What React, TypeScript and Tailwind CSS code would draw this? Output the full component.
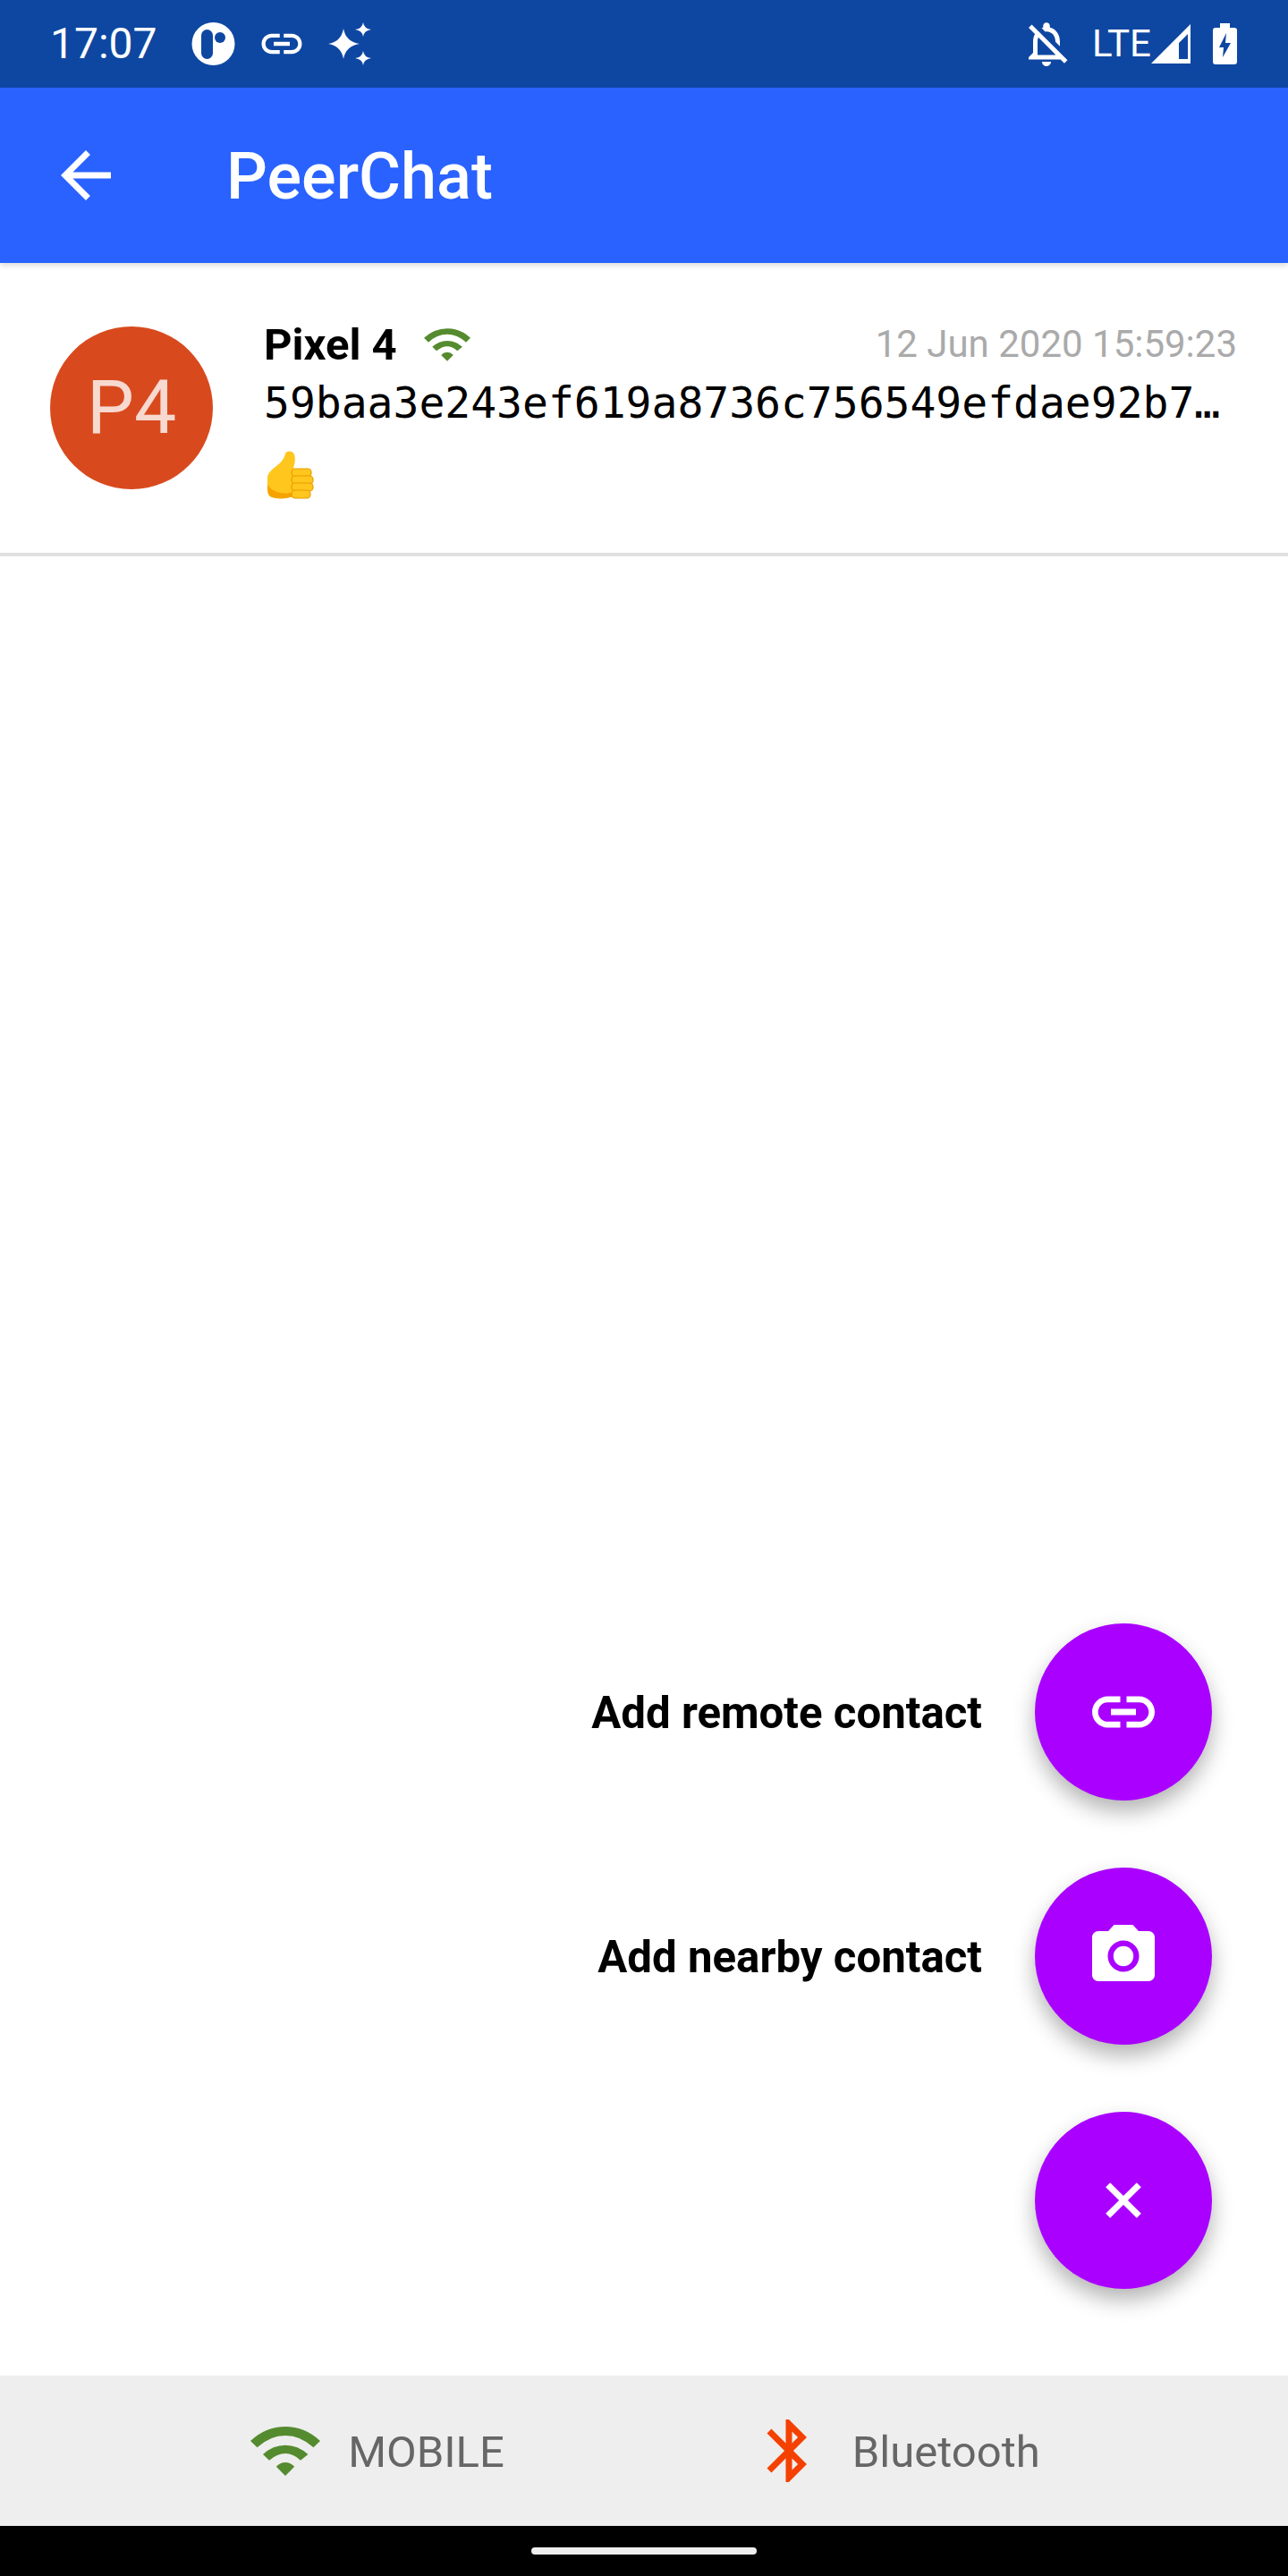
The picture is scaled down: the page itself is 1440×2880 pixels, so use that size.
import React from "react";

const LINK =
  "M3.9 12c0-1.71 1.39-3.1 3.1-3.1h4V7H7c-2.76 0-5 2.24-5 5s2.24 5 5 5h4v-1.9H7c-1.71 0-3.1-1.39-3.1-3.1zM8 13h8v-2H8v2zm9-6h-4v1.9h4c1.71 0 3.1 1.39 3.1 3.1s-1.39 3.1-3.1 3.1h-4V17h4c2.76 0 5-2.24 5-5s-2.24-5-5-5z";
const CAMERA =
  "M9 2L7.17 4H4c-1.1 0-2 .9-2 2v12c0 1.1.9 2 2 2h16c1.1 0 2-.9 2-2V6c0-1.1-.9-2-2-2h-3.17L15 2H9zm3 15c-2.76 0-5-2.24-5-5s2.24-5 5-5 5 2.24 5 5-2.24 5-5 5z";
const BELL_OFF =
  "M12 22c1.1 0 2-.89 2-2h-4c0 1.11.89 2 2 2zM12 6.5c2.49 0 4 2.02 4 4.5v.1l2 2V11c0-3.07-1.63-5.64-4.5-6.32V4c0-.83-.67-1.5-1.5-1.5s-1.5.67-1.5 1.5v.68c-.24.06-.47.15-.69.23l1.64 1.64c.18-.02.36-.05.55-.05zM5.41 3.35L4 4.76l2.81 2.81C6.29 8.57 6 9.74 6 11v5l-2 2v1h14.24l1.74 1.74 1.41-1.41L5.41 3.35zM16 17H8v-6c0-.68.12-1.32.34-1.9L16 16.76V17z";
const BLUETOOTH =
  "M17.71 7.71L12 2h-1v7.59L6.41 5 5 6.41 10.59 12 5 17.59 6.41 19 11 14.41V22h1l5.71-5.71-4.3-4.29 4.3-4.29zM13 5.83l1.88 1.88L13 9.59V5.83zm1.88 10.46L13 18.17v-3.76l1.88 1.88z";

function Icon({ d, className }: { d: string; className?: string }) {
  return (
    <svg viewBox="0 0 24 24" className={className} fill="currentColor">
      <path d={d} />
    </svg>
  );
}

function WifiArcs({ className }: { className?: string }) {
  return (
    <svg viewBox="0 0 78 55" className={className} fill="currentColor">
      <path d="M0 16 Q17 0 39 0 Q61 0 78 16 L70.5 23.3 Q56 10 39 10 Q22 10 7.5 23.3Z" />
      <path d="M14 31 Q25 20.7 39 20.7 Q53 20.7 64.4 31 L56 37.7 Q48 30 39 30 Q30 30 21 37.7Z" />
      <path d="M28.8 44.7 Q33 40 39 40 Q45 40 49.2 44.7 L39 55Z" />
    </svg>
  );
}

function ThumbsUp({ className }: { className?: string }) {
  return (
    <svg viewBox="0 0 53 54" className={className}>
      <path
        d="M1 30 C1 25 6 21 11 17 C16 13 20 9 21 3 C22 0 29 -1 31 4 C33 10 31 15 30 20 L30 50 C22 54 12 54 6 52 C2 51 1 47 1 43 Z"
        fill="#FFC61E"
      />
      <path d="M1 38 C1 46 2 51 7 52 C13 54 22 54 30 51 L30 46 C21 49 8 48 1 38 Z" fill="#F5A300" />
      <rect x="28" y="20" width="22" height="9" rx="4" fill="#FFC61E" stroke="#E99E00" strokeWidth="1.2" />
      <rect x="28" y="28" width="24" height="9" rx="4" fill="#FFC61E" stroke="#E99E00" strokeWidth="1.2" />
      <rect x="28" y="36" width="24" height="9" rx="4" fill="#FFC61E" stroke="#E99E00" strokeWidth="1.2" />
      <rect x="28" y="44" width="21" height="9" rx="4" fill="#FFC61E" stroke="#E99E00" strokeWidth="1.2" />
    </svg>
  );
}

function StatusBar() {
  return (
    <div className="flex h-[98px] shrink-0 items-center bg-[#0e47a1] text-white">
      <span className="ml-[56px] w-[124px] font-['Roboto',sans-serif] text-[48px] leading-none">17:07</span>

      {/* app notification */}
      <svg viewBox="0 0 49 48" className="ml-[34px] h-[48px] w-[49px]">
        <circle cx="24.5" cy="24" r="24" fill="#ffffff" />
        <rect x="11" y="8" width="13" height="33" rx="6.5" fill="#0e47a1" />
        <circle cx="32" cy="17" r="6" fill="#0e47a1" />
      </svg>

      <Icon d={LINK} className="ml-[25px] h-[54px] w-[54px]" />

      {/* sparkles */}
      <svg viewBox="0 0 48 48" className="ml-[25px] h-[48px] w-[48px]" fill="currentColor">
        <path d="M17 7 Q19.5 21.5 35 24 Q19.5 26.5 17 41 Q14.5 26.5 0 24 Q14.5 21.5 17 7Z" />
        <path d="M39 0 Q40 7 48 8 Q40 9 39 16 Q38 9 30 8 Q38 7 39 0Z" />
        <path d="M39 32 Q40 39 48 40 Q40 41 39 48 Q38 41 30 40 Q38 39 39 32Z" />
      </svg>

      <Icon d={BELL_OFF} className="ml-auto h-[60px] w-[60px]" />
      <span className="ml-[21px] w-[58px] font-['Liberation_Sans_Narrow','Roboto',sans-serif] text-[42px] leading-none">LTE</span>

      <svg viewBox="0 0 44 44" className="ml-[8px] h-[44px] w-[44px]" fill="currentColor">
        <path fillRule="evenodd" d="M0 44 L44 0 V44 Z M31 39 H41 V11 L31 21 Z" />
      </svg>

      <svg viewBox="0 0 27 46" className="ml-[25px] mr-[57px] h-[46px] w-[27px]">
        <path d="M8 0 H19 V5 H24 Q27 5 27 8 V43 Q27 46 24 46 H3 Q0 46 0 43 V8 Q0 5 3 5 H8 Z" fill="#ffffff" />
        <path d="M15 11 L7 27 H12 L11 38 L20 22 H14 Z" fill="#0e47a1" />
      </svg>
    </div>
  );
}

function AppBar() {
  return (
    <div className="relative z-10 flex h-[196px] shrink-0 items-center bg-[#2962ff] text-white shadow-[0_3px_6px_rgba(0,0,0,0.14)]">
      <Icon
        d="M20 11H7.83l5.59-5.59L12 4l-8 8 8 8 1.41-1.41L7.83 13H20v-2z"
        className="ml-[54px] h-[84px] w-[84px]"
      />
      <h1 className="ml-[115px] pt-[3px] font-['Roboto',sans-serif] text-[72px] leading-none font-medium">PeerChat</h1>
    </div>
  );
}

function ContactRow() {
  return (
    <div className="flex h-[328px] shrink-0 border-b-4 border-[#e0e0e0] pt-[62px] pr-[57px] pl-[56px]">
      <div className="mt-[9px] flex h-[182px] w-[182px] shrink-0 items-center justify-center rounded-full bg-[#d84a1e] font-['Roboto',sans-serif] text-[84px] leading-none text-[#f7d9d0]">
        P4
      </div>

      <div className="ml-[57px] min-w-0 flex-1">
        <div className="flex h-[58px] items-center">
          <span className="font-['Roboto',sans-serif] text-[49px] leading-none font-bold text-black">Pixel 4</span>
          <WifiArcs className="ml-[30px] h-[37px] w-[52px] text-[#558b2f]" />
          <span className="ml-auto font-['Roboto',sans-serif] text-[42px] leading-none text-[#aaaaaa]">12 Jun 2020 15:59:23</span>
        </div>
        <div className="mt-[8px] whitespace-nowrap font-['DejaVu_Sans_Mono',monospace] text-[48px] leading-[56px] text-black">
          59baa3e243ef619a8736c756549efdae92b7…
        </div>
        <ThumbsUp className="mt-[26px] ml-[3px] h-[54px] w-[53px]" />
      </div>
    </div>
  );
}

function Fab({ label, children }: { label?: string; children: React.ReactNode }) {
  return (
    <div className="flex items-center justify-end">
      {label && (
        <span className="mr-[59px] pt-[3px] font-['Roboto',sans-serif] text-[49.2px] leading-none font-bold text-black">{label}</span>
      )}
      <button className="flex h-[198px] w-[198px] items-center justify-center rounded-full bg-[#aa00ff] text-white shadow-[0_12px_24px_rgba(0,0,0,0.3)]">
        {children}
      </button>
    </div>
  );
}

export default function App() {
  return (
    <div className="flex h-[2880px] w-[1440px] flex-col overflow-hidden bg-white">
      <StatusBar />
      <AppBar />
      <ContactRow />

      <div className="flex flex-1 flex-col justify-end gap-[75px] pr-[85px] pb-[97px]">
        <Fab label="Add remote contact">
          <Icon d={LINK} className="h-[84px] w-[84px]" />
        </Fab>
        <Fab label="Add nearby contact">
          <svg viewBox="0 0 24 24" className="h-[84px] w-[84px]" fill="currentColor">
            <path d={CAMERA} />
            <circle cx="12" cy="12" r="3.2" />
          </svg>
        </Fab>
        <Fab>
          <svg viewBox="0 0 24 24" className="h-[84px] w-[84px]" fill="currentColor">
            <path d="M19 13h-6v6h-2v-6H5v-2h6V5h2v6h6v2z" transform="rotate(45 12 12)" />
          </svg>
        </Fab>
      </div>

      {/* connection status */}
      <div className="flex h-[168px] shrink-0 items-center justify-center bg-[#eeeeee] pl-[3px] font-['Roboto',sans-serif] text-[49px] leading-none text-[#666666]">
        <WifiArcs className="h-[55px] w-[78px] text-[#558b2f]" />
        <span className="ml-[31px] pt-[2px]">MOBILE</span>
        <Icon d={BLUETOOTH} className="ml-[276px] h-[84px] w-[84px] text-[#f44100]" />
        <span className="ml-[29px] pt-[2px]">Bluetooth</span>
      </div>

      {/* gesture nav */}
      <div className="flex h-[56px] shrink-0 items-center justify-center bg-black">
        <div className="h-[8px] w-[252px] rounded-full bg-[#eeeeee]" />
      </div>
    </div>
  );
}
